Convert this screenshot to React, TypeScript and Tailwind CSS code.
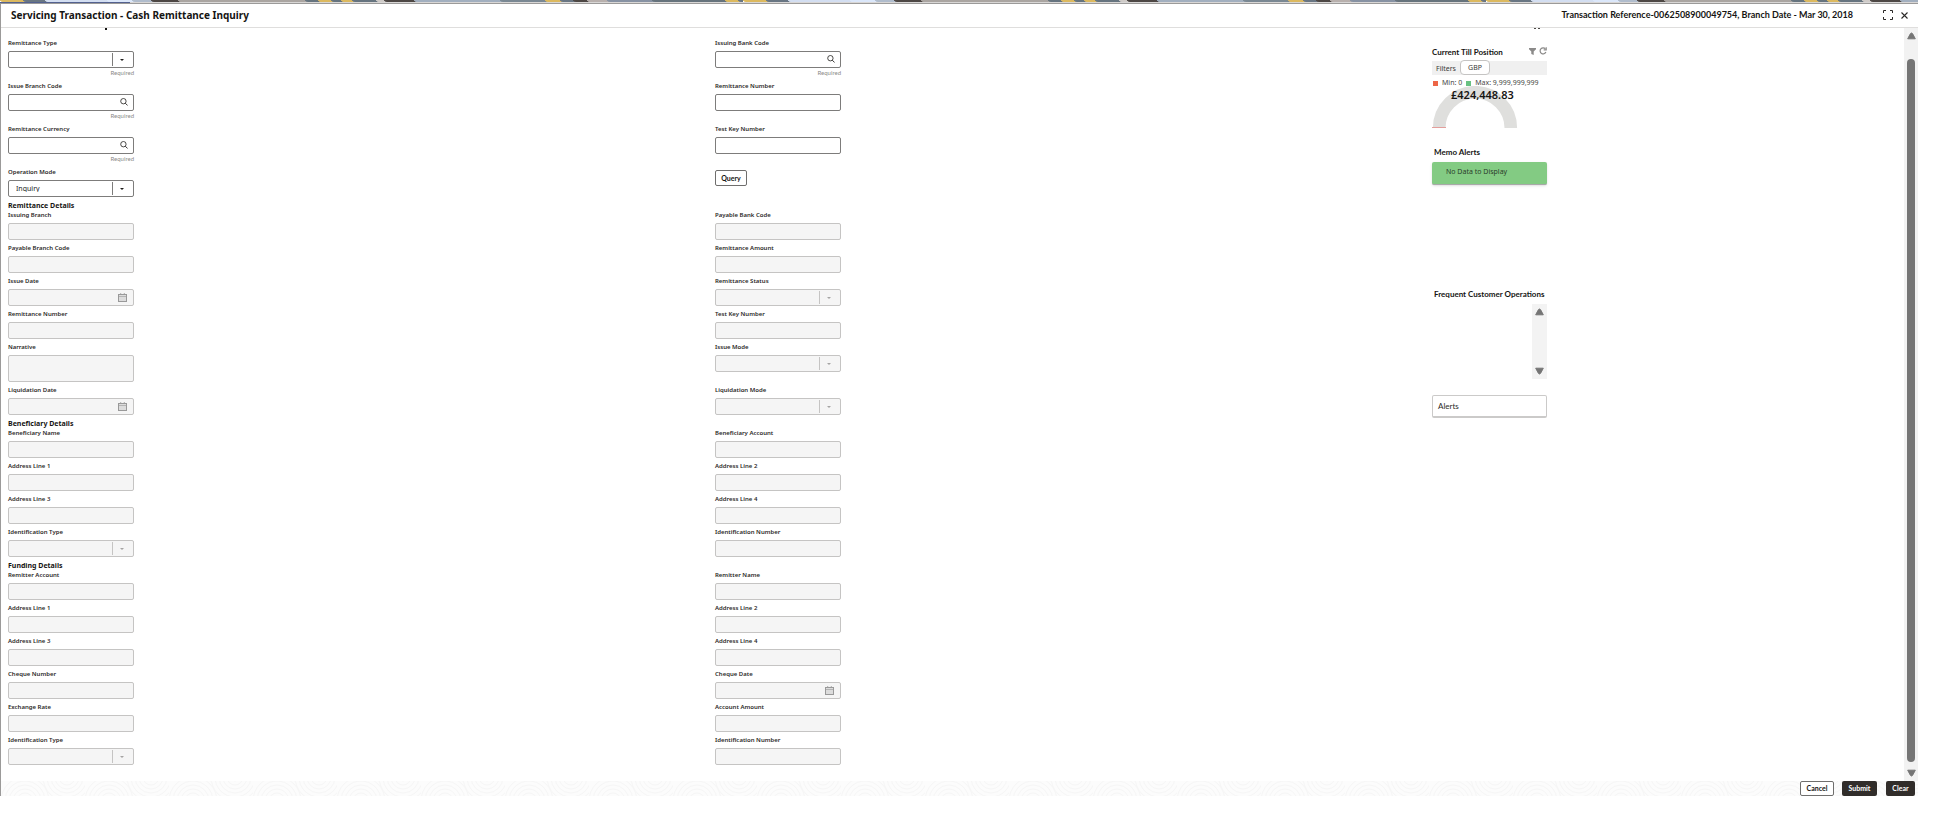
import { useId, type ReactNode } from "react";
import { clsx } from "clsx";

type FieldKind = "text" | "select" | "search" | "date" | "area" | "query";

type FieldDef = {
  label: string;
  kind?: FieldKind;
  required?: boolean;
  value?: string;
};

type Row = [FieldDef, FieldDef];

const searchRows: Row[] = [
  [
    { label: "Remittance Type", kind: "select", required: true },
    { label: "Issuing Bank Code", kind: "search", required: true },
  ],
  [{ label: "Issue Branch Code", kind: "search", required: true }, { label: "Remittance Number" }],
  [{ label: "Remittance Currency", kind: "search", required: true }, { label: "Test Key Number" }],
  [
    { label: "Operation Mode", kind: "select", value: "Inquiry" },
    { label: "Query", kind: "query" },
  ],
];

const sections: { title: string; rows: Row[] }[] = [
  {
    title: "Remittance Details",
    rows: [
      [{ label: "Issuing Branch" }, { label: "Payable Bank Code" }],
      [{ label: "Payable Branch Code" }, { label: "Remittance Amount" }],
      [{ label: "Issue Date", kind: "date" }, { label: "Remittance Status", kind: "select" }],
      [{ label: "Remittance Number" }, { label: "Test Key Number" }],
      [{ label: "Narrative", kind: "area" }, { label: "Issue Mode", kind: "select" }],
      [{ label: "Liquidation Date", kind: "date" }, { label: "Liquidation Mode", kind: "select" }],
    ],
  },
  {
    title: "Beneficiary Details",
    rows: [
      [{ label: "Beneficiary Name" }, { label: "Beneficiary Account" }],
      [{ label: "Address Line 1" }, { label: "Address Line 2" }],
      [{ label: "Address Line 3" }, { label: "Address Line 4" }],
      [{ label: "Identification Type", kind: "select" }, { label: "Identification Number" }],
    ],
  },
  {
    title: "Funding Details",
    rows: [
      [{ label: "Remitter Account" }, { label: "Remitter Name" }],
      [{ label: "Address Line 1" }, { label: "Address Line 2" }],
      [{ label: "Address Line 3" }, { label: "Address Line 4" }],
      [{ label: "Cheque Number" }, { label: "Cheque Date", kind: "date" }],
      [{ label: "Exchange Rate" }, { label: "Account Amount" }],
      [{ label: "Identification Type", kind: "select" }, { label: "Identification Number" }],
    ],
  },
];

function SearchIcon() {
  return (
    <svg viewBox="0 0 8 8" className="h-2 w-2" fill="none" stroke="#201e1c">
      <circle cx="3.4" cy="3.2" r="2.7" strokeWidth="0.8" />
      <path d="M5.3 5.2 7.6 7.5" strokeWidth="0.9" />
    </svg>
  );
}

function CalendarIcon() {
  return (
    <svg viewBox="0 0 9 9" className="h-[9px] w-[9px]" fill="none" stroke="#999">
      <rect x="0.5" y="1.5" width="8" height="7" fill="#dcdcdc" />
      <path d="M1 3.5h7" strokeWidth="0.6" />
      <path d="M2.7 0v2M6.3 0v2" strokeWidth="0.8" />
    </svg>
  );
}

function Field({ field, disabled }: { field: FieldDef; disabled: boolean }) {
  const id = useId();
  const kind = field.kind ?? "text";

  if (kind === "query") {
    return (
      <div className="pt-[3px]">
        <button className="block h-4 w-8 rounded-[2px] border border-[#6f6e6d] font-[Lato,sans-serif] text-[7px] font-bold leading-none">
          {field.label}
        </button>
      </div>
    );
  }

  const box = clsx(
    "block w-full appearance-none rounded-[2px] border px-[7px] text-[7px] leading-none outline-none",
    kind === "area" ? "h-[27px] resize-none" : "h-[17px]",
    disabled ? "border-[#c5c4c3] bg-[#f5f5f5]" : "border-[#7d7c7b] bg-white text-[#201e1c]",
  );

  return (
    <div className="w-[126px]">
      <label htmlFor={id} className="mb-[3px] block h-[10px] whitespace-nowrap text-[6px] font-semibold leading-[10px] text-[#2b2927]">
        {field.label}
      </label>
      <div className="relative">
        {kind === "select" && (
          <select id={id} disabled={disabled} className={clsx(box, "opacity-100")}>
            <option>{field.value ?? ""}</option>
          </select>
        )}
        {kind === "area" && <textarea id={id} disabled={disabled} className={box} />}
        {kind !== "select" && kind !== "area" && <input id={id} type="text" disabled={disabled} className={box} />}

        {kind === "select" && (
          <span
            className={clsx(
              "pointer-events-none absolute inset-y-[2px] right-[3px] flex w-[19px] items-center justify-center border-l",
              disabled ? "border-[#c5c4c3] text-[#a5a4a3]" : "border-[#7d7c7b] text-[#201e1c]",
            )}
          >
            <svg viewBox="0 0 4 2" className="h-[2px] w-1" fill="currentColor">
              <path d="M0 0h4L2 2z" />
            </svg>
          </span>
        )}
        {kind === "search" && (
          <span className="pointer-events-none absolute inset-y-0 right-[6px] flex items-center pb-px">
            <SearchIcon />
          </span>
        )}
        {kind === "date" && (
          <span className="pointer-events-none absolute inset-y-0 right-[7px] flex items-center">
            <CalendarIcon />
          </span>
        )}
      </div>
      {field.required && (
        <p className="h-[10px] text-right font-[Lato,sans-serif] text-[6px] leading-[10px] text-[#8b8a89]">Required</p>
      )}
    </div>
  );
}

function FieldRow({ row, disabled, className }: { row: Row; disabled: boolean; className: string }) {
  return (
    <div className={clsx("grid grid-cols-2", className)}>
      <Field field={row[0]} disabled={disabled} />
      <Field field={row[1]} disabled={disabled} />
    </div>
  );
}

function InquiryForm() {
  return (
    <form className="pr-2 pt-[10px]">
      {searchRows.map((row, i) => (
        <FieldRow key={row[0].label} row={row} disabled={false} className={i < 3 ? "h-[43px]" : "h-[33px]"} />
      ))}
      {sections.map((section) => (
        <section key={section.title}>
          <h2 className="h-[10px] text-[7px] font-bold leading-3">{section.title}</h2>
          {section.rows.map((row) => (
            <FieldRow key={row[0].label} row={row} disabled className="pb-[3px]" />
          ))}
        </section>
      ))}
    </form>
  );
}

function WidgetTitle({ children }: { children: ReactNode }) {
  return <h3 className="whitespace-nowrap font-[Lato,sans-serif] text-[8px] font-bold leading-3">{children}</h3>;
}

function TillPosition() {
  return (
    <section>
      <div className="flex items-center justify-between">
        <WidgetTitle>Current Till Position</WidgetTitle>
        <div className="flex items-center gap-[3px] pb-[2px]">
          <button aria-label="Filter">
            <svg viewBox="0 0 7 7" className="block h-[7px] w-[7px]" fill="#8b8a89">
              <path d="M0 0h7v1.2L4.7 3.5V7L2.3 6V3.5L0 1.2z" />
            </svg>
          </button>
          <button aria-label="Refresh">
            <svg viewBox="0 0 8 8" className="block h-2 w-2" fill="none" stroke="#8b8a89" strokeWidth="1.2">
              <path d="M6.4 1.9A3 3 0 1 0 6.9 5" />
              <path d="M7.2 0.3v2.6H4.7" />
            </svg>
          </button>
        </div>
      </div>
      <div className="mt-[3px] flex h-[14px] items-center bg-[#f0f0f0] pl-1 text-[7px] leading-none text-[#3a3836]">
        <span className="w-6">Filters</span>
        <button className="-mt-px h-[15px] w-[30px] rounded-[4px] border border-[#c5c4c3] bg-white text-[7px]">GBP</button>
      </div>
      <div className="mt-1 flex h-2 items-center whitespace-nowrap pl-px text-[7px] leading-2 text-[#4a4846]">
        <span className="mr-1 h-[5px] w-[5px] bg-[#ed6647]" />
        Min: 0
        <span className="ml-1 mr-1 h-[5px] w-[5px] bg-[#68c182]" />
        Max: 9,999,999,999
      </div>
      <div className="relative">
        <svg viewBox="0 0 86 42" className="-mt-px block h-[42px] w-[86px]" fill="none">
          <path d="M7.2 42a35.8 35.8 0 0 1 71.6 0" stroke="#dfdfdd" strokeWidth="12.6" />
          <path d="M0 41.5h14" stroke="#e39f9c" />
        </svg>
        <p className="absolute left-[19px] top-px text-[11px] font-semibold leading-4">£424,448.83</p>
      </div>
    </section>
  );
}

function Sidebar() {
  return (
    <aside className="ml-[2px] w-[115px] pt-[18px]">
      <TillPosition />
      <section className="mt-[18px]">
        <div className="pl-[2px]">
          <WidgetTitle>Memo Alerts</WidgetTitle>
        </div>
        <div className="mt-1 h-[23px] rounded-[2px] border-b border-[#a9a9a9] bg-[#83cb83] pl-[14px] text-[7px] leading-5 text-[#2b3b2b] shadow-sm">
          No Data to Display
        </div>
      </section>
      <section className="mt-[103px]">
        <div className="pl-[2px]">
          <WidgetTitle>Frequent Customer Operations</WidgetTitle>
        </div>
        <div className="ml-auto mt-1 flex h-[75px] w-[15px] flex-col items-center justify-between bg-[#f3f3f3] py-1">
          <ScrollArrow />
          <ScrollArrow down />
        </div>
      </section>
      <div className="mt-4 h-[23px] rounded-[2px] border border-b-2 border-[#cbcac9] pl-[5px] font-[Lato,sans-serif] text-[8px] leading-5 text-[#2b2927]">
        Alerts
      </div>
    </aside>
  );
}

function ScrollArrow({ down = false }: { down?: boolean }) {
  return (
    <svg viewBox="0 0 9 8" className="h-2 w-[9px]" fill="#757575" stroke="#757575" strokeLinejoin="round">
      <path d={down ? "M0.7 1.2h7.6L5.6 6.3Q4.5 7.7 3.4 6.3z" : "M0.7 6.8h7.6L5.6 1.7Q4.5 0.3 3.4 1.7z"} />
    </svg>
  );
}

const bannerColors: [number, number, string][] = [
  [0, 23, "#dcb95f"],
  [23, 22, "#697683"],
  [45, 62, "#d3def1"],
  [107, 25, "#dbe7fa"],
  [132, 19, "#b0bccc"],
  [151, 27, "#4d4744"],
  [178, 127, "#aaa5a1"],
  [305, 13, "#66747f"],
  [318, 13, "#dcb95f"],
  [331, 10, "#66747f"],
  [341, 11, "#dcb95f"],
  [352, 24, "#66747f"],
  [376, 8, "#cfcbc8"],
  [384, 30, "#4d4744"],
  [414, 86, "#a2afbf"],
  [500, 45, "#7a8893"],
  [545, 15, "#dcb95f"],
  [560, 13, "#697683"],
  [573, 14, "#4d4744"],
  [587, 20, "#b8b0ad"],
  [607, 45, "#8792a3"],
  [652, 73, "#66737c"],
  [725, 13, "#dcb95f"],
  [738, 5, "#697683"],
];

function Banner() {
  return (
    <svg className="block h-[3px] w-full">
      <defs>
        <pattern id="banner" width="743" height="3" patternUnits="userSpaceOnUse">
          {bannerColors.map(([x, width, fill]) => (
            <path key={x} d={`M${x} 0h${width}l4 3h-${width}z`} fill={fill} stroke={fill} />
          ))}
        </pattern>
      </defs>
      <rect width="100%" height="2" fill="url(#banner)" />
      <rect y="2" width="100%" height="1" fill="#d9d7d6" />
      <rect y="2" width="130" height="1" fill="#53618f" />
    </svg>
  );
}

function TitleBar() {
  return (
    <header className="flex h-6 items-center border-b border-[#dfdedd] pb-px pl-[10px] pr-[10px]">
      <h1 className="text-[10px] font-bold leading-4">Servicing Transaction - Cash Remittance Inquiry</h1>
      <p className="ml-auto font-[Lato,sans-serif] text-[9px] font-bold leading-4">
        Transaction Reference-0062508900049754, Branch Date - Mar 30, 2018
      </p>
      <button aria-label="Maximize" className="ml-[30px]">
        <svg viewBox="0 0 10 10" className="block h-[10px] w-[10px]" fill="none" stroke="#2b2927">
          <path d="M0.5 3V0.5H3M7 0.5h2.5V3M9.5 7v2.5H7M3 9.5H0.5V7" />
        </svg>
      </button>
      <button aria-label="Close" className="ml-2">
        <svg viewBox="0 0 7 7" className="block h-[7px] w-[7px]" fill="none" stroke="#2b2927" strokeWidth="1.1">
          <path d="M0.5 0.5l6 6M6.5 0.5l-6 6" />
        </svg>
      </button>
    </header>
  );
}

function Footer() {
  return (
    <footer className="relative flex h-[15px] justify-end pr-[3px] font-[Lato,sans-serif] text-[7px] font-bold leading-none">
      <svg className="absolute inset-0 -z-10 h-full w-full" fill="none" stroke="#f6f6f6">
        <defs>
          <pattern id="waves" width="84" height="30" patternUnits="userSpaceOnUse">
            <rect width="84" height="30" fill="#fcfcfc" stroke="none" />
            {[4, 8, 12, 16, 20, 24].map((r) => (
              <g key={r}>
                <circle cx="24" cy="20" r={r} />
                <circle cx="66" cy="-4" r={r} />
              </g>
            ))}
          </pattern>
        </defs>
        <rect width="100%" height="100%" fill="url(#waves)" stroke="none" />
      </svg>
      <button className="w-[34px] rounded-[2px] border border-[#6f6e6d] bg-white">Cancel</button>
      <button className="ml-2 w-[35px] rounded-[2px] bg-[#312d2a] text-white">Submit</button>
      <button className="ml-[9px] w-[29px] rounded-[2px] bg-[#312d2a] text-white">Clear</button>
    </footer>
  );
}

export default function App() {
  return (
    <div className="min-h-screen bg-white pr-[33px] font-['Noto_Sans',sans-serif] text-[#161513]">
      <Banner />
      <main className="isolate border-l border-t border-[#9b9a99]">
        <TitleBar />
        <div className="flex">
          <div className="relative grid grow grid-cols-[3fr_1fr] pb-[13px] pl-[7px]">
            {/* tails of the page heading and toolbar, scrolled under the title bar */}
            <span className="absolute left-[104px] top-0 h-[2px] w-[2px] bg-[#161513]" />
            <span className="absolute left-[1533px] top-0 flex gap-[2px]">
              <i className="h-px w-[2px] bg-[#4a4846]" />
              <i className="h-px w-[2px] bg-[#4a4846]" />
            </span>
            <InquiryForm />
            <Sidebar />
          </div>
          <div className="flex w-[14px] flex-col items-center bg-[#f2f2f2] py-1">
            <ScrollArrow />
            <div className="mb-[7px] mt-[19px] w-2 grow rounded-full bg-[#757575]" />
            <ScrollArrow down />
          </div>
        </div>
        <Footer />
      </main>
    </div>
  );
}
